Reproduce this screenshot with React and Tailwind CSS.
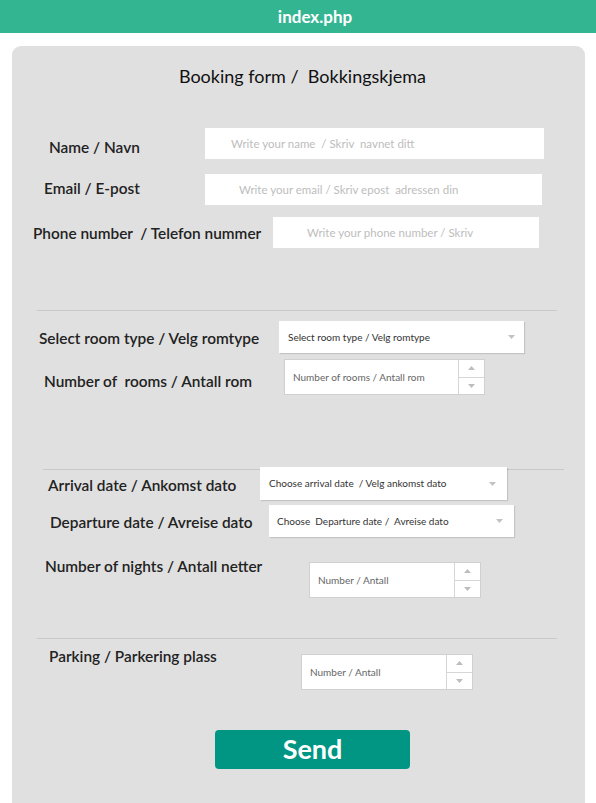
import React from "react";

const font = { fontFamily: "Lato, 'Open Sans', sans-serif" };

function Chevron() {
  return (
    <svg width="7" height="4" viewBox="0 0 7 4" className="shrink-0">
      <path d="M0 0 L7 0 L3.5 4 Z" fill="#c2c2c2" />
    </svg>
  );
}

function Spinner() {
  return (
    <div className="flex w-[26px] shrink-0 flex-col border-l border-[#d6d6d6]">
      <div className="flex flex-1 items-center justify-center border-b border-[#d6d6d6]">
        <svg width="7" height="4" viewBox="0 0 7 4">
          <path d="M0 4 L7 4 L3.5 0 Z" fill="#bdbdbd" />
        </svg>
      </div>
      <div className="flex flex-1 items-center justify-center">
        <svg width="7" height="4" viewBox="0 0 7 4">
          <path d="M0 0 L7 0 L3.5 4 Z" fill="#bdbdbd" />
        </svg>
      </div>
    </div>
  );
}

function Label({ children, className }) {
  return (
    <div
      className={
        "shrink-0 whitespace-pre text-[15.4px] leading-[20px] font-semibold text-[#222] " +
        className
      }
    >
      {children}
    </div>
  );
}

export default function App() {
  return (
    <div className="h-[803px] w-full overflow-hidden bg-white" style={font}>
      <div className="flex h-[33px] items-center justify-center bg-[#34b592] pl-[34px]">
        <span className="text-[17px] font-bold text-white">index.php</span>
      </div>

      <div className="ml-[12px] mt-[13px] h-[780px] w-[573px] rounded-t-[9px] bg-[#e0e0e0]">
        <div className="flex justify-center pt-[20px] pl-[8px]">
          <span className="whitespace-pre text-[18px] leading-[20px] text-[#111]">
            Booking form /  Bokkingskjema
          </span>
        </div>

        {/* Name */}
        <div className="mt-[42px] flex items-start pl-[37px]">
          <Label className="mt-[9px] w-[156px]">Name / Navn</Label>
          <div className="flex h-[31px] w-[339px] items-center bg-white pl-[26px]">
            <span className="whitespace-pre text-[11.5px] text-[#bdbdbd]">
              Write your name  / Skriv  navnet ditt
            </span>
          </div>
        </div>

        {/* Email */}
        <div className="mt-[15px] flex items-start pl-[32px]">
          <Label className="mt-[4px] w-[161px]">Email / E-post</Label>
          <div className="flex h-[31px] w-[337px] items-center bg-white pl-[34px]">
            <span className="whitespace-pre text-[11.5px] text-[#bdbdbd]">
              Write your email / Skriv epost  adressen din
            </span>
          </div>
        </div>

        {/* Phone */}
        <div className="mt-[12px] flex items-start pl-[21px]">
          <Label className="mt-[6px] w-[240px]">Phone number  / Telefon nummer</Label>
          <div className="flex h-[31px] w-[266px] items-center bg-white pl-[34px]">
            <span className="whitespace-pre text-[11.5px] text-[#bdbdbd]">
              Write your phone number / Skriv
            </span>
          </div>
        </div>

        <div className="ml-[25px] mt-[62px] h-px w-[520px] bg-[#c8c8c8]" />

        {/* Room type */}
        <div className="mt-[10px] flex items-start pl-[27px]">
          <Label className="mt-[7px] w-[240px]">Select room type / Velg romtype</Label>
          <div className="flex h-[32px] w-[245px] items-center justify-between bg-white pl-[9px] pr-[9px] shadow-[1px_1px_1px_rgba(0,0,0,0.12)]">
            <span className="whitespace-pre text-[10px] text-[#333]">
              Select room type / Velg romtype
            </span>
            <Chevron />
          </div>
        </div>

        {/* Rooms */}
        <div className="mt-[6px] flex items-start pl-[32px]">
          <Label className="mt-[12px] w-[240px]">Number of  rooms / Antall rom</Label>
          <div className="flex h-[36px] w-[201px] border border-[#d0d0d0] bg-white">
            <div className="flex flex-1 items-center pl-[8px]">
              <span className="whitespace-pre text-[10px] text-[#666]">
                Number of rooms / Antall rom
              </span>
            </div>
            <Spinner />
          </div>
        </div>

        <div className="ml-[31px] mt-[74px] h-px w-[521px] bg-[#c8c8c8]" />

        {/* Arrival */}
        <div className="mt-[-3px] flex items-start pl-[36px]">
          <Label className="mt-[8px] w-[212px]">Arrival date / Ankomst dato</Label>
          <div className="flex h-[33px] w-[247px] items-center justify-between bg-white pl-[9px] pr-[11px] shadow-[1px_1px_1px_rgba(0,0,0,0.12)]">
            <span className="whitespace-pre text-[10px] text-[#333]">
              Choose arrival date  / Velg ankomst dato
            </span>
            <Chevron />
          </div>
        </div>

        {/* Departure */}
        <div className="mt-[5px] flex items-start pl-[38px]">
          <Label className="mt-[7px] w-[219px]">Departure date / Avreise dato</Label>
          <div className="flex h-[32px] w-[245px] items-center justify-between bg-white pl-[8px] pr-[11px] shadow-[1px_1px_1px_rgba(0,0,0,0.12)]">
            <span className="whitespace-pre text-[10px] text-[#333]">
              Choose  Departure date /  Avreise dato
            </span>
            <Chevron />
          </div>
        </div>

        {/* Nights */}
        <div className="mt-[19px] flex items-start pl-[33px]">
          <Label className="w-[264px]">Number of nights / Antall netter</Label>
          <div className="mt-[6px] flex h-[36px] w-[172px] border border-[#d0d0d0] bg-white">
            <div className="flex flex-1 items-center pl-[8px]">
              <span className="whitespace-pre text-[10px] text-[#666]">Number / Antall</span>
            </div>
            <Spinner />
          </div>
        </div>

        <div className="ml-[25px] mt-[40px] h-px w-[520px] bg-[#c8c8c8]" />

        {/* Parking */}
        <div className="mt-[7px] flex items-start pl-[37px]">
          <Label className="w-[252px]">Parking / Parkering plass</Label>
          <div className="mt-[8px] flex h-[36px] w-[172px] border border-[#d0d0d0] bg-white">
            <div className="flex flex-1 items-center pl-[8px]">
              <span className="whitespace-pre text-[10px] text-[#666]">Number / Antall</span>
            </div>
            <Spinner />
          </div>
        </div>

        <div className="ml-[203px] mt-[40px] flex h-[39px] w-[195px] items-center justify-center rounded-[4px] bg-[#009683]">
          <span className="text-[27px] font-bold text-white">Send</span>
        </div>
      </div>
    </div>
  );
}
